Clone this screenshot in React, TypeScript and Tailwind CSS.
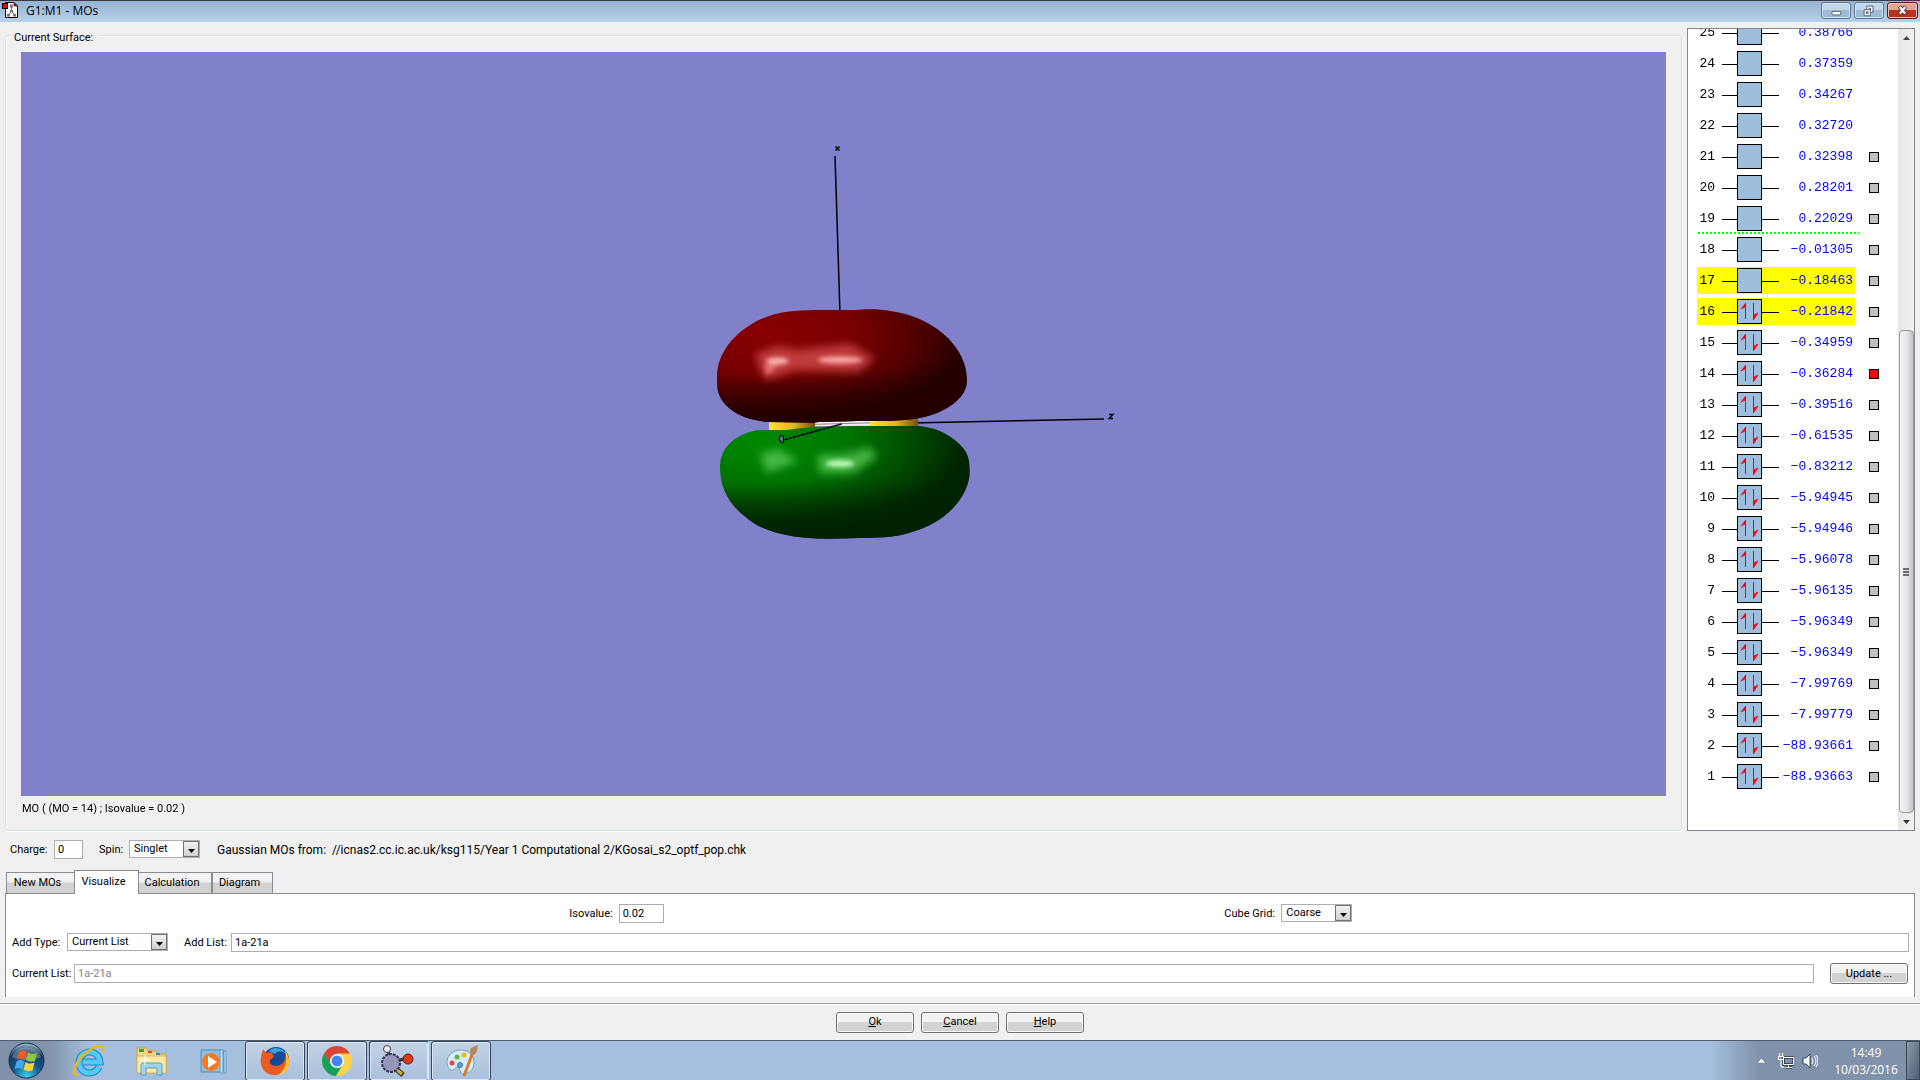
import type { ReactNode } from 'react';

type Orbital = { id: number; energy: string };

const energies = [
  '0.38766', '0.37359', '0.34267', '0.32720', '0.32398', '0.28201', '0.22029',
  '-0.01305', '-0.18463', '-0.21842', '-0.34959', '-0.36284', '-0.39516', '-0.61535',
  '-0.83212', '-5.94945', '-5.94946', '-5.96078', '-5.96135', '-5.96349', '-5.96349',
  '-7.99769', '-7.99779', '-88.93661', '-88.93663',
];
const orbitals: Orbital[] = energies.map((energy, i) => ({ id: 25 - i, energy }));
const tabs = ['New MOs', 'Visualize', 'Calculation', 'Diagram'];

const upperLobe =
  'M81 290C82 220 130 160 205 121C260 95 310 91 380 90L500 90C520 87 570 86 600 93C680 103 740 140 775 175C812 215 832 255 831 305C829 355 765 400 685 415C620 426 540 422 480 424C420 426 390 425 372 428L235 426C190 422 150 412 118 385C85 355 80 335 81 290z';
const lowerLobe =
  'M90 560C92 500 135 465 200 451L290 450C350 440 420 440 500 438L690 438C750 445 790 470 820 505C837 525 840 550 839 585C833 640 790 700 720 735C650 768 600 773 540 773L415 776C330 776 260 765 200 735C130 690 90 640 90 560z';

const TitleBar = () => (
  <header className="flex h-[22px] shrink-0 items-start border-t border-[#3a3a42] bg-linear-to-b from-[#97b3d2] to-[#b8d1ea] pl-0.5 font-['Open_Sans',sans-serif] text-xs">
    <svg className="h-[18px] w-[17px]" viewBox="0 0 17 18">
      <path d="M4 1.5h8l3.500 3.500v11.500h-12v-15z" fill="#fff" stroke="#000" />
      <path d="M12 2l3 3h-3z" fill="#e00" stroke="#000" strokeWidth=".6" />
      <path d="M9.500 5v5M9.500 10l-3 4M9.500 10l3 4" stroke="#777" strokeWidth="1.200" />
      <path d="M8 3.500h3v3H8zM8 9h3v2H8zM5 13h3v2.500H5zM11 13h3v2.500h-3z" fill="#777" />
      <rect x=".5" y="2.500" width="5" height="5" fill="#f00" stroke="#000" />
    </svg>
    <h1 className="ml-[7px] leading-5">G1:M1 - MOs</h1>
    <div className="ml-auto flex gap-[3px] pt-px pr-0.5">
      <CaptionButton label="Minimize">
        <rect x="10.500" y="9.500" width="10" height="4" rx="1" fill="#fff" stroke="#4a5568" />
      </CaptionButton>
      <CaptionButton label="Restore">
        <g fill="#fff" stroke="#4a5568">
          <path d="M12.500 3.500h7v7h-7z" />
          <path d="M15 6h2v2h-2z" fill="#b8cce2" />
          <path d="M9.500 7.500h7v7h-7z" />
          <path d="M12 10h2v2h-2z" fill="#b8cce2" />
        </g>
      </CaptionButton>
      <button aria-label="Close" className="h-[17px] w-[31px] rounded-[3px] border border-[#5b1a1c] bg-linear-to-b from-[#e3a498] from-45% to-[#b9321c] to-50% shadow-[inset_0_0_0_1px_#ecc0b6]">
        <svg viewBox="0 0 29 17" className="size-full">
          <path d="M11 4l7 8.500M18 4l-7 8.500" stroke="#4a3a48" strokeWidth="4.500" />
          <path d="M11.500 4.500l6 7.500M17.500 4.500l-6 7.500" stroke="#fff" strokeWidth="2.500" />
        </svg>
      </button>
    </div>
  </header>
);

const CaptionButton = ({ label, children }: { label: string; children: ReactNode }) => (
  <button aria-label={label} className="h-[17px] w-[30px] rounded-[3px] border border-[#5f7590] bg-linear-to-b from-[#c3d5e9] from-45% to-[#9ebad8] to-50% shadow-[inset_0_0_0_1px_#d8e5f2]">
    <svg viewBox="0 0 30 17" className="size-full">{children}</svg>
  </button>
);

const SurfaceView = () => (
  <svg className="min-h-0 w-full flex-1 bg-[#8080cb]" viewBox="0 0 1645 744" role="img" aria-label="Molecular orbital surface">
    <defs>
      <radialGradient id="red" cx=".22" cy=".22" r=".82">
        <stop offset="0" stopColor="#8a0000" />
        <stop offset=".4" stopColor="#780000" />
        <stop offset=".7" stopColor="#540000" />
        <stop offset=".95" stopColor="#260000" />
      </radialGradient>
      <radialGradient id="green" cx=".18" cy=".15" r=".85">
        <stop offset="0" stopColor="#008a00" />
        <stop offset=".4" stopColor="#007400" />
        <stop offset=".7" stopColor="#004a00" />
        <stop offset=".95" stopColor="#002300" />
      </radialGradient>
      <linearGradient id="redShade" x1=".4" y1="0" x2=".5" y2="1">
        <stop offset=".55" stopColor="#240000" stopOpacity="0" />
        <stop offset=".92" stopColor="#240000" stopOpacity=".95" />
      </linearGradient>
      <linearGradient id="greenShade" x1=".4" y1="0" x2=".5" y2="1">
        <stop offset=".5" stopColor="#002200" stopOpacity="0" />
        <stop offset=".9" stopColor="#002200" stopOpacity=".9" />
      </linearGradient>
      <linearGradient id="gold">
        <stop offset="0" stopColor="#ffe030" />
        <stop offset=".55" stopColor="#e8b020" />
        <stop offset="1" stopColor="#705010" />
      </linearGradient>
      <filter id="soft" x="-30%" y="-60%" width="160%" height="220%">
        <feGaussianBlur stdDeviation="13" />
      </filter>
      <filter id="glow" x="-30%" y="-60%" width="160%" height="220%">
        <feGaussianBlur stdDeviation="7" />
      </filter>
    </defs>
    <path d="M814 104L819 262" stroke="#000" strokeWidth="1.500" />
    <path d="M890 371L1083 367" stroke="#000" strokeWidth="1.500" />
    <path d="M814.500 94.500l4 4M818.500 94.500l-4 4" stroke="#000" strokeWidth="1.500" />
    <path d="M1088 362.500h4l-4 4h4" stroke="#000" strokeWidth="1.300" fill="none" />
    <g transform="translate(669 228) scale(.3333)">
      <path d="M372 422H560V437L372 438z" fill="#f4f0f4" />
      <path d="M372 433L560 428" stroke="#8a8288" strokeWidth="3" />
      <path d="M237 424H375V444L290 452L237 450z" fill="url(#gold)" />
      <path d="M540 426L600 418H684V442L540 443z" fill="url(#gold)" />
      <path d={upperLobe} fill="url(#red)" />
      <path d={upperLobe} fill="url(#redShade)" />
      <path d={lowerLobe} fill="url(#green)" />
      <path d={lowerLobe} fill="url(#greenShade)" />
      <g filter="url(#soft)">
        <path d="M195 222L265 198L320 210L480 192L555 235L505 276L320 270L225 300z" fill="#d85050" opacity=".75" />
        <path d="M210 522L265 508L325 543L230 578z" fill="#4ec04e" opacity=".9" />
        <path d="M380 525L480 520L535 500L562 530L490 580L390 580z" fill="#4ec04e" opacity=".85" />
      </g>
      <g filter="url(#glow)">
        <ellipse cx="262" cy="243" rx="34" ry="11" fill="#ffc0c0" opacity=".9" />
        <ellipse cx="450" cy="240" rx="66" ry="11" fill="#ffb0b0" opacity=".9" />
        <path d="M220 255L270 250L232 285z" fill="#f08080" opacity=".8" />
        <ellipse cx="450" cy="551" rx="42" ry="11" fill="#c8ffc0" opacity=".9" />
      </g>
      <path d="M280 480L455 432" stroke="#000" strokeWidth="5" />
      <path d="M280 480L455 432" stroke="#66668a" strokeWidth="2" strokeDasharray="5 8" />
      <path d="M269 468h11v20h-7v-6h-4z" fill="#7777b5" stroke="#000" strokeWidth="3" />
    </g>
  </svg>
);

const OrbitalBox = ({ filled }: { filled: boolean }) => (
  <svg className="block h-[25px] w-[57px] shrink-0" viewBox="0 0 57 25">
    <path d="M0 13.500h57" stroke="#000" />
    <rect x="15.500" y=".5" width="24" height="24" fill="#9fbede" stroke="#000" />
    {filled && (
      <g stroke="#f00" fill="#f00">
        <path d="M23.500 4v16M31.500 4v17" />
        <path d="M19 10l4-5v3zM36 14l-4 6v-4z" strokeWidth=".7" />
      </g>
    )}
  </svg>
);

const OrbitalRow = ({ orbital }: { orbital: Orbital }) => {
  const highlighted = orbital.id === 16 || orbital.id === 17;
  return (
    <li className="relative flex h-[31px] items-center pl-[9px]">
      <div className={`flex h-[27px] w-[158px] items-center ${highlighted ? 'bg-[#ff0]' : ''}`}>
        <span className="w-[18px] text-right">{orbital.id}</span>
        <span className="ml-[7px] flex">
          <OrbitalBox filled={orbital.id <= 16} />
        </span>
        <span className="flex-1 text-right whitespace-nowrap text-[#00f]">
          <span className="-ml-4 pr-0.5">{orbital.energy.replace('-', '−')}</span>
        </span>
      </div>
      {orbital.id <= 21 && (
        <button
          aria-label={`Surface for orbital ${orbital.id}`}
          className={`ml-3.5 size-2.5 border border-black ${orbital.id === 14 ? 'bg-[#f00]' : 'bg-[#c0c0c0]'}`}
        />
      )}
      {orbital.id === 19 && (
        <div className="absolute bottom-0 left-2.5 h-0.5 w-[161px] bg-[repeating-linear-gradient(90deg,#0f0_0_2px,transparent_2px_4px)]" />
      )}
    </li>
  );
};

const OrbitalPanel = () => (
  <aside className="flex w-[228px] shrink-0 border border-[#828790] bg-white font-['Liberation_Mono',monospace] text-[13px]">
    <div className="min-w-0 flex-1 overflow-hidden">
      <ol className="-mt-3">
        {orbitals.map((orbital) => (
          <OrbitalRow key={orbital.id} orbital={orbital} />
        ))}
      </ol>
    </div>
    <div className="flex w-4 flex-col items-center bg-linear-to-r from-[#e6e6e6] to-[#f2f2f2]">
      <button aria-label="Scroll up" className="flex h-[17px] w-full items-center justify-center">
        <svg width="7" height="4" viewBox="0 0 7 4"><path d="M0 4l3.500-4L7 4z" fill="#444" /></svg>
      </button>
      <div className="flex-[285]" />
      <div className="flex w-[15px] flex-[482] items-center justify-center rounded-sm border border-[#979797] bg-linear-to-r from-[#f5f5f5] via-[#e6e6e8] to-[#c4c4c8]">
        <svg width="6" height="8" viewBox="0 0 6 8"><path d="M0 1h6M0 4h6M0 7h6" stroke="#444" strokeWidth="1.600" /></svg>
      </div>
      <button aria-label="Scroll down" className="flex h-[17px] w-full items-center justify-center">
        <svg width="7" height="4" viewBox="0 0 7 4"><path d="M0 0l3.500 4L7 0z" fill="#333" /></svg>
      </button>
    </div>
  </aside>
);

const Select = ({ id, value, className }: { id: string; value: string; className: string }) => (
  <div className={`relative h-[18px] border border-[#abadb3] bg-white ${className}`}>
    <select id={id} defaultValue={value} className="block size-full appearance-none pl-1 leading-4">
      <option>{value}</option>
    </select>
    <span className="pointer-events-none absolute inset-y-0 right-0 flex w-4 items-center justify-center border border-[#707070] bg-linear-to-b from-[#f2f2f2] to-[#cfcfcf] pt-1">
      <svg width="7" height="4" viewBox="0 0 7 4"><path d="M0 0h7L3.500 4z" /></svg>
    </span>
  </div>
);

const field = 'h-[19px] border border-[#abadb3] bg-white px-[3px]';
const pushButton =
  'h-[21px] w-[78px] rounded-[3px] border border-[#707070] bg-linear-to-b from-[#f2f2f2] from-45% to-[#d2d2d2] to-50% shadow-[inset_0_0_0_1px_#f8f8f8]';

const Settings = () => (
  <section className="mx-[5px] shrink-0">
    <div className="flex h-[29px] items-start pl-[5px] leading-5">
      <label htmlFor="charge" className="w-11">Charge:</label>
      <input id="charge" defaultValue="0" className={`${field} w-[29px]`} />
      <label htmlFor="spin" className="ml-4 w-[30px]">Spin:</label>
      <Select id="spin" value="Singlet" className="w-[71px]" />
      <p className="ml-[17px] text-xs leading-5 whitespace-pre">
        {'Gaussian MOs from:  //icnas2.cc.ic.ac.uk/ksg115/Year 1 Computational 2/KGosai_s2_optf_pop.chk'}
      </p>
    </div>
    <div role="tablist" className="flex h-6 items-end">
      {tabs.map((tab) => (
        <button
          key={tab}
          role="tab"
          aria-selected={tab === 'Visualize'}
          className={
            tab === 'Visualize'
              ? 'relative z-10 -mx-px -mb-px h-6 w-[65px] border border-b-0 border-[#898c95] bg-white pr-1.5'
              : `h-[21px] border border-b-0 border-[#898c95] bg-linear-to-b from-[#f2f2f2] from-45% to-[#d2d2d2] to-50% pr-1.5 ${
                  tab === 'New MOs' ? 'ml-px w-[69px]' : tab === 'Calculation' ? 'w-[74px]' : 'w-[61px]'
                }`
          }
        >
          {tab}
        </button>
      ))}
    </div>
    <div role="tabpanel" className="flex h-[104px] flex-col border border-b-0 border-[#898c95] bg-white pt-2.5 pr-[5px] pl-1.5 leading-5">
      <div className="grid h-[29px] grid-cols-[652fr_689fr_557fr] items-start">
        <div className="flex justify-end">
          <label htmlFor="isovalue" className="mr-1.5">Isovalue:</label>
          <input id="isovalue" defaultValue="0.02" className={`${field} w-[45px]`} />
        </div>
        <div className="flex justify-end">
          <label htmlFor="grid" className="w-[57px]">Cube Grid:</label>
          <Select id="grid" value="Coarse" className="w-[71px]" />
        </div>
      </div>
      <div className="flex h-[30px] items-start">
        <label htmlFor="addType" className="w-[55px] whitespace-nowrap">Add Type:</label>
        <Select id="addType" value="Current List" className="w-[101px]" />
        <label htmlFor="addList" className="ml-4 w-[47px]">Add List:</label>
        <input id="addList" defaultValue="1a-21a" className={`${field} min-w-0 flex-1`} />
      </div>
      <div className="flex items-center pr-px">
        <label htmlFor="currentList" className="w-[62px] whitespace-nowrap">Current List:</label>
        <input id="currentList" defaultValue="1a-21a" disabled className={`${field} min-w-0 flex-1 text-[#838383]`} />
        <button className={`${pushButton} ml-4`}>Update ...</button>
      </div>
    </div>
  </section>
);

const TaskButton = ({ label, active, children }: { label: string; active?: boolean; children: ReactNode }) => (
  <button
    aria-label={label}
    className={`flex h-10 w-[60px] items-center justify-center ${
      active ? 'rounded-[3px] border border-[#35465c] bg-linear-to-b from-[#c3d3e6] to-[#a9c0dc] shadow-[inset_0_0_0_1px_#dce7f3]' : ''
    } ${label === 'GaussView' ? 'border-r-[#dce7f3] pr-1.5 shadow-[inset_0_0_0_1px_#dce7f3,inset_-5px_0_0_#a9c0dc,inset_-6px_0_0_#4f627c]' : ''}`}
  >
    <svg className="size-8 overflow-visible" viewBox="0 0 32 32">{children}</svg>
  </button>
);

const Taskbar = () => (
  <footer className="flex h-10 shrink-0 items-center border-t border-[#4d5c70] bg-[#a6bfde] bg-[linear-gradient(90deg,#7f90a8_0,#8293ab_50px,#a6bfde_90px,#a6bfde_calc(100%-210px),#8092aa_calc(100%-160px),#8092aa_100%)]">
    <button aria-label="Start" className="ml-2 size-[37px]">
      <svg viewBox="0 0 37 37" className="size-full">
        <defs>
          <radialGradient id="orb" cx=".5" cy=".95" r=".9">
            <stop offset="0" stopColor="#38d0f0" />
            <stop offset=".45" stopColor="#135a90" />
            <stop offset=".8" stopColor="#18395c" />
            <stop offset="1" stopColor="#8aa8c0" />
          </radialGradient>
        </defs>
        <circle cx="18.500" cy="18.500" r="17.500" fill="url(#orb)" stroke="#1b3148" />
        <path d="M4 15a15 13 0 0129 0c-9 4-20 4-29 0z" fill="#fff" opacity=".25" />
        <path d="M11 10c3-2 5-2 8 0l-2 8c-3-2-5-2-8 0z" fill="#ee5a24" />
        <path d="M20 10.500c3 2 6 2 9 .5l-2 8c-3 1-6 1-9-1z" fill="#8cc63e" />
        <path d="M8.500 19.500c3-2 5-2 8 0l-2 8c-3-2-5-2-8 0z" fill="#49a5ea" />
        <path d="M17.500 20c3 2 6 2 9 .5l-2 8c-3 1-6 1-9-1z" fill="#fcd13b" />
      </svg>
    </button>
    <nav className="ml-3.5 flex items-center gap-0.5">
      <TaskButton label="Internet Explorer">
        <path d="M26 22A10.500 10.500 0 1127 17H10" fill="none" stroke="#1688cc" strokeWidth="7" />
        <path d="M26 22A10.500 10.500 0 1127 17H10" fill="none" stroke="#58c8f4" strokeWidth="5" />
        <path d="M5 30C-4 30 4 13 17 5c9-6 15-5 12 2" fill="none" stroke="#edb916" strokeWidth="2.500" />
      </TaskButton>
      <TaskButton label="Windows Explorer">
        <path d="M2 3h9l2 3h8l2 3h8v19H2z" fill="#f2d77d" stroke="#c6a148" />
        <path d="M4 4h5v3H4z" fill="#35a345" />
        <path d="M13 6h4v2h-4z" fill="#d84238" />
        <path d="M21 8h4v2h-4z" fill="#278cd2" />
        <path d="M2 11h29v17H2z" fill="#fbeaa6" stroke="#d5b55c" />
        <path d="M6 30V20q0-2 2-2h17q2 0 2 2v10h-5v-7H11v7z" fill="#9fd4ee" stroke="#559fc6" />
        <path d="M10 10v10M5 15h10" stroke="#fff" />
      </TaskButton>
      <TaskButton label="Windows Media Player">
        <path d="M4 5h22v22H4z" fill="#8ebfe0" stroke="#4d8dba" />
        <path d="M23 5h3v23h-3zM27 6h2v22h-2z" fill="#b9dcf0" stroke="#4d8dba" strokeWidth=".7" />
        <circle cx="14" cy="17" r="9" fill="#f47b20" />
        <path d="M11 11l9 6-9 6z" fill="#fff" />
      </TaskButton>
      <TaskButton label="Firefox" active>
        <circle cx="17" cy="15" r="13" fill="#174a94" />
        <path d="M10 6c5-6 15-2 17 3-5-4-9-3-11 0z" fill="#37a8df" />
        <path d="M26 6c5 6 6 13 1 19-6 7-18 7-23-1-4-6-2-13 0-20l3 4c2-1 4-1 6 0l2 4-4 3c-2 6 8 8 13 3 3-4 3-8 2-12z" fill="#e95b20" />
        <path d="M26 6c7 8 5 22-7 24 8-6 10-14 7-24z" fill="#ffc52f" />
      </TaskButton>
      <TaskButton label="Chrome" active>
        <circle cx="16" cy="16" r="15" fill="#ffd24a" />
        <path d="M3 8.500A15 15 0 0129 8.500H16L10 20z" fill="#db4437" />
        <path d="M3 8.500A15 15 0 0015 31L22 19H10z" fill="#16a05d" />
        <circle cx="16" cy="16" r="7" fill="#fff" />
        <circle cx="16" cy="16" r="5.500" fill="#4285f4" />
      </TaskButton>
      <TaskButton label="GaussView" active>
        <path d="M12 17L7 4M13 17l14-4" stroke="#333" strokeWidth="3" />
        <path d="M15 23l8 7" stroke="#333" strokeWidth="5" />
        <path d="M16 24l6 5" stroke="#d8a628" strokeWidth="3" />
        <circle cx="11" cy="18" r="9" fill="#9696bd" stroke="#36364c" strokeWidth="2" strokeDasharray="3 1" />
        <circle cx="7" cy="4" r="3.500" fill="#eee" stroke="#444" />
        <circle cx="28" cy="14" r="5" fill="#dd3818" stroke="#581a12" />
      </TaskButton>
      <TaskButton label="Paint" active>
        <path d="M15 5C2 6-1 18 5 25c6 1 4-3 7-3 4 0 2 7 7 7 15-2 13-25-4-24z" fill="#d7edf8" stroke="#6c9ebb" />
        <circle cx="7" cy="18" r="2.500" fill="#e54436" />
        <circle cx="12" cy="12" r="2.500" fill="#58b947" />
        <circle cx="19" cy="10" r="2.500" fill="#f3b51c" />
        <circle cx="15" cy="20" r="2.500" fill="#5ba6d3" stroke="#377ca9" />
        <path d="M19 31L28 7" stroke="#d9782a" strokeWidth="3" />
        <path d="M25 7c-1-4 3-5 8-7-1 5-1 9-5 10z" fill="#b58758" />
      </TaskButton>
    </nav>
    <div className="ml-auto flex h-full items-center font-['Open_Sans',sans-serif] text-xs leading-[17px] text-white">
      <button aria-label="Show hidden icons">
        <svg width="9" height="5" viewBox="0 0 9 5"><path d="M0 5l4.500-5L9 5z" fill="#fff" stroke="#34445a" strokeWidth=".5" /></svg>
      </button>
      <svg className="ml-3 h-4 w-4" viewBox="0 0 16 16" fill="none">
        <path d="M5.500 4.500h10v7h-10zM8 14.500h6M10.500 12v2" fill="#7d8fa6" stroke="#2b3645" strokeWidth="2.500" />
        <path d="M5.500 4.500h10v7h-10zM8 14.500h6M10.500 12v2M1.500 0v3M4.500 0v3M.5 3.500h5v3h-5zM3 7v7h3" stroke="#fff" />
      </svg>
      <svg className="ml-2 h-4 w-4" viewBox="0 0 16 16">
        <path d="M1 5h3l4-4v14l-4-4H1z" fill="#fff" stroke="#344257" />
        <path d="M10 5q2 3 0 6M12 3q4 5 0 10M14 2q4 6 0 12" fill="none" stroke="#fff" />
      </svg>
      <time className="ml-4 w-16 text-center">14:49<br />10/03/2016</time>
      <button aria-label="Show desktop" className="ml-2 h-full w-3.5 border border-[#3c4859] bg-linear-to-br from-[#8c9aac] to-[#4e5f75]" />
    </div>
  </footer>
);

export default function App() {
  return (
    <div className="flex h-screen flex-col overflow-hidden bg-[#f0f0f0] font-[Roboto,sans-serif] text-[11px] text-black">
      <TitleBar />
      <main className="flex min-h-0 flex-1 px-[5px] pt-1.5">
        <section className="mt-[7px] mr-[5px] flex min-w-0 flex-1 flex-col rounded-[3px] border border-[#d5dfe5] px-[15px] shadow-[inset_1px_1px_0_#fff,0_1px_0_#fff]">
          <h2 className="-mt-2 mb-2 -ml-[7px] h-4 w-[86px] bg-[#f0f0f0] leading-5">Current Surface:</h2>
          <SurfaceView />
          <p className="h-[34px] pl-px leading-[25px]">MO ( (MO = 14) ; Isovalue = 0.02 )</p>
        </section>
        <OrbitalPanel />
      </main>
      <div className="h-[9px] shrink-0" />
      <Settings />
      <div className="mt-1.5 flex h-[37px] shrink-0 justify-center gap-[7px] border-t border-[#a0a0a0] pt-2 shadow-[inset_0_1px_0_#fff]">
        <button className={pushButton}><u>O</u>k</button>
        <button className={pushButton}><u>C</u>ancel</button>
        <button className={pushButton}><u>H</u>elp</button>
      </div>
      <Taskbar />
    </div>
  );
}
